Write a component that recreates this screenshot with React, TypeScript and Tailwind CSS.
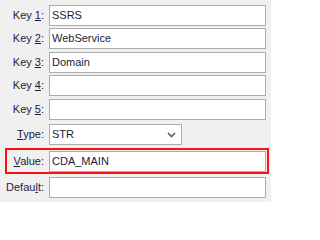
import type { ReactNode } from "react";

const font = { fontFamily: '"Liberation Sans", Arial, sans-serif' };

function Label({ children, width }: { children: ReactNode; width: string }) {
  return (
    <div className={`${width} shrink-0 text-right text-[11px] leading-none text-[#1c1c3a]`}>
      {children}
    </div>
  );
}

function Field({ value }: { value?: string }) {
  return (
    <div className="flex h-[21px] flex-1 items-center border border-[#acacac] bg-white pl-[2px] text-[11px] leading-none text-[#1c1c3a]">
      {value}
    </div>
  );
}

function Row({ label, value, className }: { label: ReactNode; value?: string; className?: string }) {
  return (
    <div className={`flex h-[21px] items-center gap-[5px] ${className ?? ""}`}>
      <Label width="w-[39px]">{label}</Label>
      <Field value={value} />
    </div>
  );
}

export default function App() {
  return (
    <div className="h-[202px] w-[271px] overflow-hidden bg-[#f0f0f0] px-[5px] pt-[5px] leading-none" style={font}>
      <Row label={<>Key <u>1</u>:</>} value="SSRS" />
      <Row className="mt-[2px]" label={<>Key <u>2</u>:</>} value="WebService" />
      <Row className="mt-[3px]" label={<>Key <u>3</u>:</>} value="Domain" />
      <Row className="mt-[2px]" label={<>Key <u>4</u>:</>} />
      <Row className="mt-[3px]" label={<>Key <u>5</u>:</>} />

      <div className="mt-[4px] flex h-[21px] items-center gap-[5px]">
        <Label width="w-[39px]">
          <u>T</u>ype:
        </Label>
        <div className="flex h-[21px] w-[133px] items-center justify-between border border-[#acacac] bg-white pl-[2px] pr-[5px] text-[11px] text-[#1c1c3a]">
          <span>STR</span>
          <svg width="9" height="6" viewBox="0 0 9 6" className="mt-[1px]">
            <path d="M1 1 L4.5 4.5 L8 1" fill="none" stroke="#5a5a5a" strokeWidth="1.6" />
          </svg>
        </div>
      </div>

      <div className="mr-[-3px] mt-[3px] flex h-[26px] items-center gap-[5px] border-2 border-[#ff1010] pr-[1px]">
        <Label width="w-[37px]">
          <u>V</u>alue:
        </Label>
        <Field value="CDA_MAIN" />
      </div>

      <Row
        className="mt-[3px]"
        label={
          <>
            Defau<u>l</u>t:
          </>
        }
      />
    </div>
  );
}
